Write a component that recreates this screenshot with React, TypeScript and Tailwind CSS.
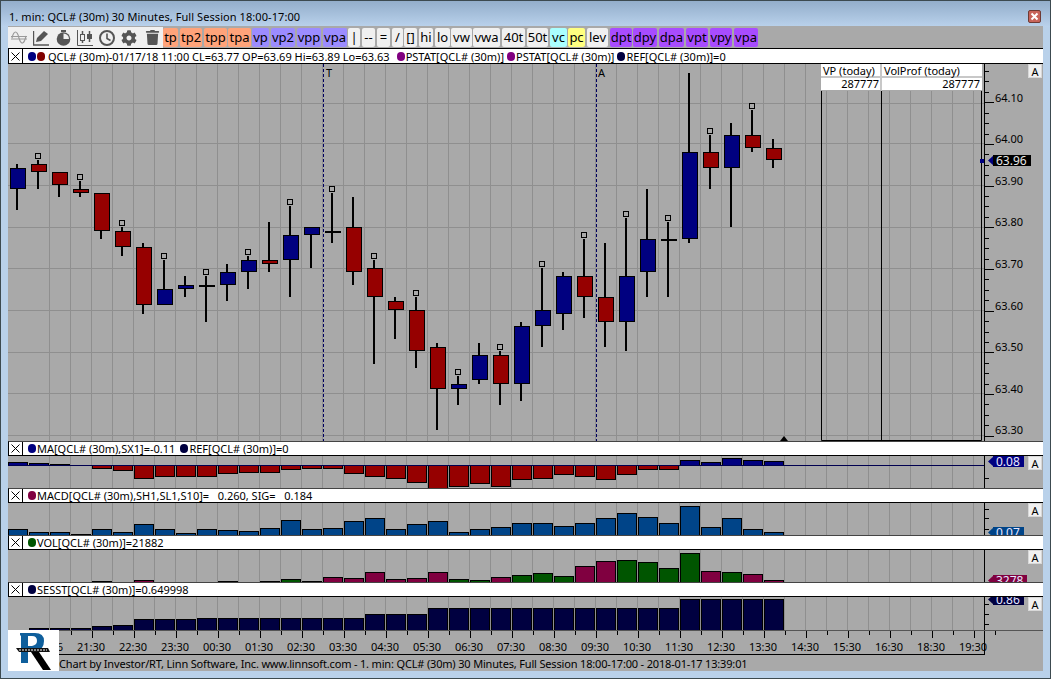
import React from 'react';
import { FaCog, FaTrash } from 'react-icons/fa';

// [x, wickTop, wickBottom, bodyTop, bodyBottom, color, markerY]  r=red b=blue d=doji
type Candle = [number, number, number, number, number, string, number?];

const candles: Candle[] = [
  [17, 164, 210, 168, 189, 'b'],
  [38, 160, 189, 164, 172, 'r', 156],
  [59, 172, 197, 172, 185, 'r'],
  [80, 181, 197, 189, 193, 'r', 177],
  [101, 193, 239, 193, 231, 'r'],
  [122, 227, 256, 231, 247, 'r', 223],
  [143, 243, 314, 247, 305, 'r'],
  [164, 260, 305, 289, 305, 'b', 256],
  [185, 276, 297, 285, 289, 'b'],
  [206, 276, 322, 286, 286, 'd', 272],
  [227, 264, 301, 272, 285, 'b'],
  [248, 256, 289, 260, 272, 'b', 252],
  [269, 222, 272, 260, 264, 'r'],
  [290, 206, 297, 235, 260, 'b', 202],
  [311, 227, 268, 227, 235, 'b'],
  [332, 193, 243, 232, 232, 'd', 189],
  [353, 197, 285, 227, 272, 'r'],
  [374, 260, 364, 268, 297, 'r', 256],
  [395, 297, 339, 301, 310, 'r'],
  [416, 297, 368, 310, 351, 'r', 293],
  [437, 343, 430, 347, 389, 'r'],
  [458, 376, 405, 384, 389, 'b', 372],
  [479, 343, 384, 355, 380, 'b'],
  [500, 351, 405, 355, 384, 'r', 347],
  [521, 322, 401, 326, 384, 'b'],
  [542, 268, 347, 310, 326, 'b', 264],
  [563, 272, 330, 276, 314, 'b'],
  [584, 239, 318, 276, 297, 'r', 235],
  [605, 243, 347, 297, 322, 'r'],
  [626, 218, 351, 276, 322, 'b', 214],
  [647, 189, 297, 239, 272, 'b'],
  [668, 222, 297, 240, 240, 'd', 218],
  [689, 73, 243, 152, 239, 'b'],
  [710, 135, 189, 152, 168, 'r', 131],
  [731, 123, 227, 135, 168, 'b'],
  [752, 110, 152, 135, 148, 'r', 106],
  [773, 139, 168, 148, 160, 'r'],
];

const maBars = [462, 463, 464, 465, 468, 470, 478, 476, 476, 476, 473, 472, 472, 469, 468, 468, 473, 476, 478, 482, 488, 486, 483, 486, 479, 478, 474, 476, 479, 474, 469, 469, 460, 462, 458, 460, 461];
const macdBars = [529, 532, 532, 534, 529, 532, 524, 529, 533, 529, 530, 531, 528, 520, 529, 528, 521, 518, 529, 524, 521, 532, 529, 527, 523, 523, 526, 523, 518, 513, 517, 523, 506, 527, 518, 529, 532];
// null = no bar, g = green, m = maroon
const volBars: [number | null, string][] = [
  [null, 'm'], [null, 'm'], [null, 'm'], [null, 'm'], [581, 'm'], [null, 'm'], [580, 'm'], [null, 'm'], [null, 'm'], [null, 'm'],
  [581, 'g'], [null, 'm'], [581, 'g'], [579, 'g'], [581, 'g'], [577, 'm'], [578, 'm'], [572, 'm'], [579, 'm'], [578, 'm'],
  [572, 'm'], [579, 'g'], [580, 'g'], [577, 'm'], [575, 'g'], [573, 'g'], [576, 'g'], [566, 'm'], [561, 'm'], [560, 'g'],
  [562, 'g'], [568, 'g'], [553, 'g'], [571, 'm'], [572, 'g'], [574, 'm'], [580, 'm'],
];
const sessBars = [null, 628, 628, 628, 626, 625, 619, 619, 619, 618, 618, 618, 618, 618, 618, 618, 618, 614, 614, 614, 608, 608, 608, 608, 608, 608, 608, 608, 608, 608, 608, 608, 599, 599, 599, 599, 599];

const priceLabels = [
  ['64.10', 98], ['64.00', 139], ['63.90', 181], ['63.80', 222], ['63.70', 264], ['63.60', 306], ['63.50', 347], ['63.40', 389], ['63.30', 430],
] as const;
const hLines = [103, 143, 185, 227, 268, 310, 352, 393, 435];
const gridX = Array.from({ length: 45 }, (_, i) => 49 + i * 21);
const timeLabels = ['20:36', '21:30', '22:30', '23:30', '00:30', '01:30', '02:30', '03:30', '04:30', '05:30', '06:30', '07:30', '08:30', '09:30', '10:30', '11:30', '12:30', '13:30', '14:30', '15:30', '16:30', '18:30', '19:30'];

const toolButtons: [string, number, number, string][] = [
  ['tp', 163, 178, 'bg-[#ffa37a]'], ['tp2', 180, 202, 'bg-[#ffa37a]'], ['tpp', 204, 227, 'bg-[#ffa37a]'], ['tpa', 228, 251, 'bg-[#ffa37a]'],
  ['vp', 252, 269, 'bg-[#9c8cff]'], ['vp2', 271, 295, 'bg-[#9c8cff]'], ['vpp', 297, 321, 'bg-[#9c8cff]'], ['vpa', 323, 347, 'bg-[#9c8cff]'],
  ['|', 348, 360, 'bg-[#f0f0f0]'], ['--', 362, 375, 'bg-[#f0f0f0]'], ['=', 377, 390, 'bg-[#f0f0f0]'], ['/', 392, 403, 'bg-[#f0f0f0]'],
  ['[]', 404, 417, 'bg-[#f0f0f0]'], ['hi', 419, 433, 'bg-[#f0f0f0]'], ['lo', 435, 450, 'bg-[#f0f0f0]'], ['vw', 451, 472, 'bg-[#f0f0f0]'],
  ['vwa', 473, 500, 'bg-[#f0f0f0]'], ['40t', 502, 525, 'bg-[#f0f0f0]'], ['50t', 527, 548, 'bg-[#f0f0f0]'], ['vc', 550, 567, 'bg-[#aaffff]'],
  ['pc', 568, 585, 'bg-[#ffff80]'], ['lev', 587, 608, 'bg-[#f0f0f0]'], ['dpt', 610, 632, 'bg-[#a84cff]'], ['dpy', 633, 657, 'bg-[#a84cff]'],
  ['dpa', 659, 684, 'bg-[#a84cff]'], ['vpt', 686, 708, 'bg-[#a84cff]'], ['vpy', 710, 732, 'bg-[#a84cff]'], ['vpa', 734, 758, 'bg-[#a84cff]'],
];

const Dot = ({ color }: { color: string }) => (
  <span className={`block w-[8px] h-[9px] rounded-full shrink-0 ${color}`} />
);

const XBox = () => (
  <div className="w-[14px] h-full border-r border-black flex items-center justify-center shrink-0">
    <svg width="9" height="9" viewBox="0 0 9 9" stroke="#000" strokeWidth="1"><path d="M0.5 0.5L8.5 8.5M8.5 0.5L0.5 8.5" /></svg>
  </div>
);

const StudyRow = ({ children, top, tall = false }: { children: React.ReactNode; top: number; tall?: boolean }) => (
  <div
    className={`absolute left-[8px] w-[1035px] bg-white border-l border-b border-l-black border-b-black border-t flex items-center text-black text-[11px] leading-none whitespace-pre ${tall ? 'h-[16px] border-t-black' : 'h-[15px] border-t-[#444444]'}`}
    style={{ top }}
  >
    <XBox />
    {children}
  </div>
);

const AButton = ({ top }: { top: number }) => (
  <div className="absolute left-[1028px] w-[14px] h-[14px] bg-[#f0f0f0] border border-[#d8d8d8] flex items-center justify-center text-[11px] leading-none text-black" style={{ top }}>A</div>
);

const Tag = ({ top, width, color, text }: { top: number; width: number; color: string; text: string }) => (
  <div className="absolute left-[988px] h-[11px]" style={{ top, width }}>
    <svg className="absolute left-0 top-0" width="6" height="11"><path d="M6 0L0 5.5L6 11Z" fill={color} /></svg>
    <div className="absolute left-[5px] right-0 top-0 bottom-0 pl-[3px] text-[#e8e8ff] text-[12px] leading-[11px]" style={{ backgroundColor: color }}>{text}</div>
  </div>
);

const Grid = ({ y1, y2 }: { y1: number; y2: number }) => (
  <>
    {gridX.map((x) => <line key={x} x1={x + 0.5} x2={x + 0.5} y1={y1} y2={y2} stroke="#8f8f8f" />)}
  </>
);

const Bar = ({ i, top, bottom, fill }: { i: number; top: number; bottom: number; fill: string }) => {
  const cx = 17 + i * 21;
  const left = Math.max(cx - 9, 8);
  return <rect x={left + 0.5} y={top + 0.5} width={cx + 11 - left - 1} height={Math.max(bottom - top, 0)} fill={fill} stroke="#000" />;
};

function Chart() {
  return (
    <svg className="absolute left-0 top-0 pointer-events-none" width="1051" height="679">
      <Grid y1={64} y2={441} />
      {hLines.map((y) => <line key={y} x1={8} x2={984} y1={y + 0.5} y2={y + 0.5} stroke="#8f8f8f" />)}
      <line x1={323.5} x2={323.5} y1={64} y2={441} stroke="#000060" strokeDasharray="3 2" />
      <line x1={596.5} x2={596.5} y1={64} y2={441} stroke="#000060" strokeDasharray="3 2" />

      {candles.map(([x, wt, wb, bt, bb, c, m]) => (
        <g key={x}>
          <rect x={x - 1} y={wt} width={2} height={wb - wt} fill="#000" />
          {c === 'd' ? (
            <rect x={x - 7} y={bt - 1} width={16} height={2} fill="#000" />
          ) : (
            <rect x={x - 6.5} y={bt + 0.5} width={15} height={bb - bt - 1} fill={c === 'r' ? '#960000' : '#000080'} stroke="#000" />
          )}
          {m !== undefined && <rect x={x - 2.5} y={m - 2.5} width={5} height={5} fill="none" stroke="#000" />}
        </g>
      ))}

      {/* VP boxes */}
      <path d="M821.5 90V440.5H981.5V90M881.5 90V440.5" fill="none" stroke="#000" />
      <path d="M784 436L788 441H780Z" fill="#000" />

      {/* main price axis */}
      <line x1={984.5} x2={984.5} y1={64} y2={441} stroke="#000" />
      {Array.from({ length: 37 }, (_, i) => 71 + i * 10.42).map((y, i) => (
        <line key={i} x1={984} x2={(i + 1) % 4 === 0 ? 994 : 989} y1={Math.round(y) + 0.5} y2={Math.round(y) + 0.5} stroke="#000" />
      ))}
      <rect x={980} y={159} width={4} height={4} fill="#000080" />

      {/* MA panel */}
      <Grid y1={456} y2={488} />
      {maBars.map((y, i) =>
        y < 465 ? <Bar key={i} i={i} top={y} bottom={465} fill="#000080" /> : y > 465 ? <Bar key={i} i={i} top={465} bottom={y} fill="#960000" /> : null,
      )}
      <line x1={8} x2={984} y1={465.5} y2={465.5} stroke="#000050" />
      <line x1={984.5} x2={984.5} y1={456} y2={488} stroke="#000" />
      <line x1={984} x2={989} y1={478.5} y2={478.5} stroke="#000" />

      {/* MACD panel */}
      <Grid y1={503} y2={535} />
      {macdBars.map((y, i) => <Bar key={i} i={i} top={y} bottom={537} fill="#004488" />)}
      <line x1={984.5} x2={984.5} y1={503} y2={535} stroke="#000" />
      {[509, 518, 529].map((y) => <line key={y} x1={984} x2={989} y1={y + 0.5} y2={y + 0.5} stroke="#000" />)}

      {/* VOL panel */}
      <Grid y1={550} y2={582} />
      {volBars.map(([y, c], i) => (y === null ? null : <Bar key={i} i={i} top={y} bottom={584} fill={c === 'g' ? '#005500' : '#800040'} />))}
      <line x1={984.5} x2={984.5} y1={550} y2={582} stroke="#000" />

      {/* SESST panel */}
      <Grid y1={597} y2={630} />
      {sessBars.map((y, i) => (y === null ? null : <Bar key={i} i={i} top={y} bottom={630} fill="#000040" />))}
      <line x1={984.5} x2={984.5} y1={597} y2={630} stroke="#000" />
      {[604, 614, 624].map((y) => <line key={y} x1={984} x2={989} y1={y + 0.5} y2={y + 0.5} stroke="#000" />)}

      {/* time axis */}
      <line x1={8} x2={1043} y1={630.5} y2={630.5} stroke="#555" />
      {Array.from({ length: 48 }, (_, i) => 71 + i * 21).filter((x) => x < 1000).map((x, i) => (
        <line key={x} x1={x + 0.5} x2={x + 0.5} y1={631} y2={i % 2 === 0 ? 635 : 638} stroke="#000" />
      ))}
      <line x1={59} x2={984.5} y1={654.5} y2={654.5} stroke="#000" />
      <line x1={984.5} x2={984.5} y1={631} y2={655} stroke="#000" />
    </svg>
  );
}

function Logo() {
  return (
    <div className="absolute left-[8px] top-[630px] w-[51px] h-[41px] bg-white">
      <svg width="51" height="41" viewBox="0 0 51 41">
        <path d="M12 3H27Q36 3 36 11Q36 20 27 22H20V33H13V6L12 5Z" fill="#0f5f9c" />
        <path d="M20 6V16H24Q29 15 29 11Q29 6 24 6Z" fill="#fff" />
        <path d="M23 22H31L43 40H35Z" fill="#000" />
        <path d="M8 18H40L42 22H11Z" fill="#111" />
        <path d="M11 20H39" stroke="#fff" strokeWidth="1" strokeDasharray="2 1" />
      </svg>
    </div>
  );
}

export default function App() {
  return (
    <div className="relative w-[1051px] h-[679px] overflow-hidden bg-[#b9d1ea] [font-family:'Noto_Sans','Liberation_Sans',sans-serif]">
      {/* window frame */}
      <div className="absolute inset-0 border border-[#3c4a50] pointer-events-none z-20" />
      <div className="absolute left-[1px] right-[1px] top-[1px] h-[26px] bg-gradient-to-b from-[#93aecb] to-[#bad2ec]" />
      <div className="absolute left-[9px] top-[9px] text-[11px] tracking-[0.07px] leading-[15px] text-black">1. min: QCL# (30m) 30 Minutes, Full Session 18:00-17:00</div>
      <div className="absolute left-[1028px] top-[10px] w-[13px] h-[13px] rounded-[2px] bg-[#c8645a] border border-[#6e3a34] flex items-center justify-center">
        <svg width="9" height="9" viewBox="0 0 9 9" stroke="#fff" strokeWidth="2"><path d="M1.5 1.5L7.5 7.5M7.5 1.5L1.5 7.5" /></svg>
      </div>

      {/* client area */}
      <div className="absolute left-[8px] top-[26px] w-[1035px] h-[645px] bg-[#a9a9a9]" />

      {/* toolbar */}
      <div className="absolute left-[8px] top-[27px] w-[155px] h-[21px] bg-[#f0f0f0] text-[#555555]">
        <svg className="absolute left-[3px] top-[3px]" width="16" height="15" viewBox="0 0 16 15" fill="none" stroke="#9a9a9a" strokeWidth="1.2">
          <path d="M0 6.5H16M0 9H16M1 8C3 0 6 0 8 8C10 15 13 15 15 6" />
        </svg>
        <svg className="absolute left-[25px] top-[3px]" width="16" height="16" viewBox="0 0 16 16">
          <path d="M0.5 1V15H16" fill="none" stroke="#555555" strokeWidth="1.4" />
          <path d="M3 12L4 8L11 1L15 4L8 11Z" fill="#555555" />
        </svg>
        <svg className="absolute left-[48px] top-[3px]" width="15" height="16" viewBox="0 0 15 16">
          <path d="M5 0H10V2H5Z" fill="#555555" />
          <circle cx="7.5" cy="9" r="6.8" fill="#555555" />
          <path d="M7.5 9V3.5A5.5 5.5 0 0 1 13 9Z" fill="#f0f0f0" />
        </svg>
        <svg className="absolute left-[69px] top-[3px]" width="16" height="16" viewBox="0 0 16 16" fill="none" stroke="#555555">
          <path d="M0.5 0V15.5H16" />
          <path d="M5.5 1V13M12.5 1V12" strokeWidth="1.5" />
          <rect x="3.5" y="4.5" width="4" height="6" fill="#f0f0f0" />
          <rect x="10.5" y="4.5" width="4" height="4" fill="#555555" />
        </svg>
        <svg className="absolute left-[91px] top-[3px]" width="16" height="16" viewBox="0 0 16 16" fill="none" stroke="#555555">
          <circle cx="8" cy="8" r="7" strokeWidth="2" />
          <path d="M8 3.5V8.5L11.5 10.5" strokeWidth="1.6" />
        </svg>
        <FaCog className="absolute left-[113px] top-[3px]" size={16} />
        <FaTrash className="absolute left-[137px] top-[3px]" size={15} />
      </div>
      {toolButtons.map(([label, l, r, bg], i) => (
        <div
          key={i}
          className={`absolute top-[28px] h-[19px] rounded-[2px] flex items-center justify-center text-[13px] leading-none text-black ${bg}`}
          style={{ left: l, width: r - l }}
        >
          {label}
        </div>
      ))}

      {/* chart grid, candles and sub panels */}
      <Chart />

      {/* value tags, the legend rows below cut them off */}
      <Tag top={456} width={36} color="#000080" text="0.08" />
      <Tag top={527} width={36} color="#004488" text="0.07" />
      <Tag top={575} width={39} color="#800040" text="3278" />
      <Tag top={594} width={36} color="#000040" text="0.86" />

      {/* legend rows */}
      <StudyRow top={48} tall>
        <span className="ml-[5px] flex gap-[1px]"><Dot color="bg-[#000080]" /><Dot color="bg-[#800000]" /></span>
        <span className="ml-[3px]">QCL# (30m)-01/17/18 11:00 CL=63.77 OP=63.69 Hi=63.89 Lo=63.63</span>
        <span className="ml-[7px]"><Dot color="bg-[#800080]" /></span>
        <span className="ml-[1px]">PSTAT[QCL# (30m)]</span>
        <span className="ml-[3px]"><Dot color="bg-[#800080]" /></span>
        <span className="ml-[1px]">PSTAT[QCL# (30m)]</span>
        <span className="ml-[3px]"><Dot color="bg-[#000040]" /></span>
        <span className="ml-[1px]">REF[QCL# (30m)]=0</span>
      </StudyRow>
      <StudyRow top={441}>
        <span className="ml-[5px]"><Dot color="bg-[#000080]" /></span>
        <span className="ml-[1px]">MA[QCL# (30m),SX1]=-0.11</span>
        <span className="ml-[5px]"><Dot color="bg-[#000040]" /></span>
        <span className="ml-[1px]">REF[QCL# (30m)]=0</span>
      </StudyRow>
      <StudyRow top={488}>
        <span className="ml-[5px]"><Dot color="bg-[#800040]" /></span>
        <span className="ml-[1px]">{'MACD[QCL# (30m),SH1,SL1,S10]=   0.260, SIG=   0.184'}</span>
      </StudyRow>
      <StudyRow top={535}>
        <span className="ml-[5px]"><Dot color="bg-[#005500]" /></span>
        <span className="ml-[1px]">VOL[QCL# (30m)]=21882</span>
      </StudyRow>
      <StudyRow top={582}>
        <span className="ml-[5px]"><Dot color="bg-[#000040]" /></span>
        <span className="ml-[1px]">SESST[QCL# (30m)]=0.649998</span>
      </StudyRow>

      {/* VP table */}
      <div className="absolute left-[821px] top-[64px] w-[161px] h-[27px] bg-white grid grid-cols-[61px_100px] grid-rows-[14px_13px] text-[11px] leading-[12px] text-black whitespace-nowrap">
        <div className="pl-[2px] pt-[1px] border-r-2 border-b-2 border-[#c8c8c8]">VP (today)</div>
        <div className="pl-[2px] pt-[1px] border-b-2 border-[#c8c8c8]">VolProf (today)</div>
        <div className="text-right pr-[1px] border-r-2 border-[#c8c8c8] border-b border-b-[#a9a9a9]">287777</div>
        <div className="text-right pr-[2px] border-b border-b-[#a9a9a9]">287777</div>
      </div>

      {/* markers on the chart */}
      <div className="absolute left-[326px] top-[67px] text-[11px] leading-none text-black">T</div>
      <div className="absolute left-[598px] top-[67px] text-[11px] leading-none text-black">A</div>

      {/* price axis */}
      {priceLabels.map(([t, y]) => (
        <div key={t} className="absolute left-[995px] text-[11px] leading-none text-black" style={{ top: y - 6 }}>{t}</div>
      ))}
      <div className="absolute left-[988px] top-[155px] w-[43px] h-[11px]">
        <svg className="absolute left-0 top-0" width="6" height="11"><path d="M6 0L0 5.5L6 11Z" fill="#000080" /></svg>
        <div className="absolute left-[5px] right-0 top-0 bottom-0 pl-[3px] bg-black text-[#e8e8e8] text-[12px] leading-[11px]">63.96</div>
      </div>

      <AButton top={64} />
      <AButton top={456} />
      <AButton top={503} />
      <AButton top={550} />
      <AButton top={597} />

      {/* time labels */}
      {timeLabels.map((t, i) => (
        <div key={i} className="absolute w-[40px] text-center text-[11px] leading-none text-black" style={{ left: 29 + i * 42, top: 641 }}>{t}</div>
      ))}
      <Logo />
      <div className="absolute left-[59px] top-[658px] text-[11px] tracking-[-0.17px] leading-none text-black whitespace-pre">Chart by Investor/RT, Linn Software, Inc. www.linnsoft.com - 1. min: QCL# (30m) 30 Minutes, Full Session 18:00-17:00 - 2018-01-17 13:39:01</div>
    </div>
  );
}
